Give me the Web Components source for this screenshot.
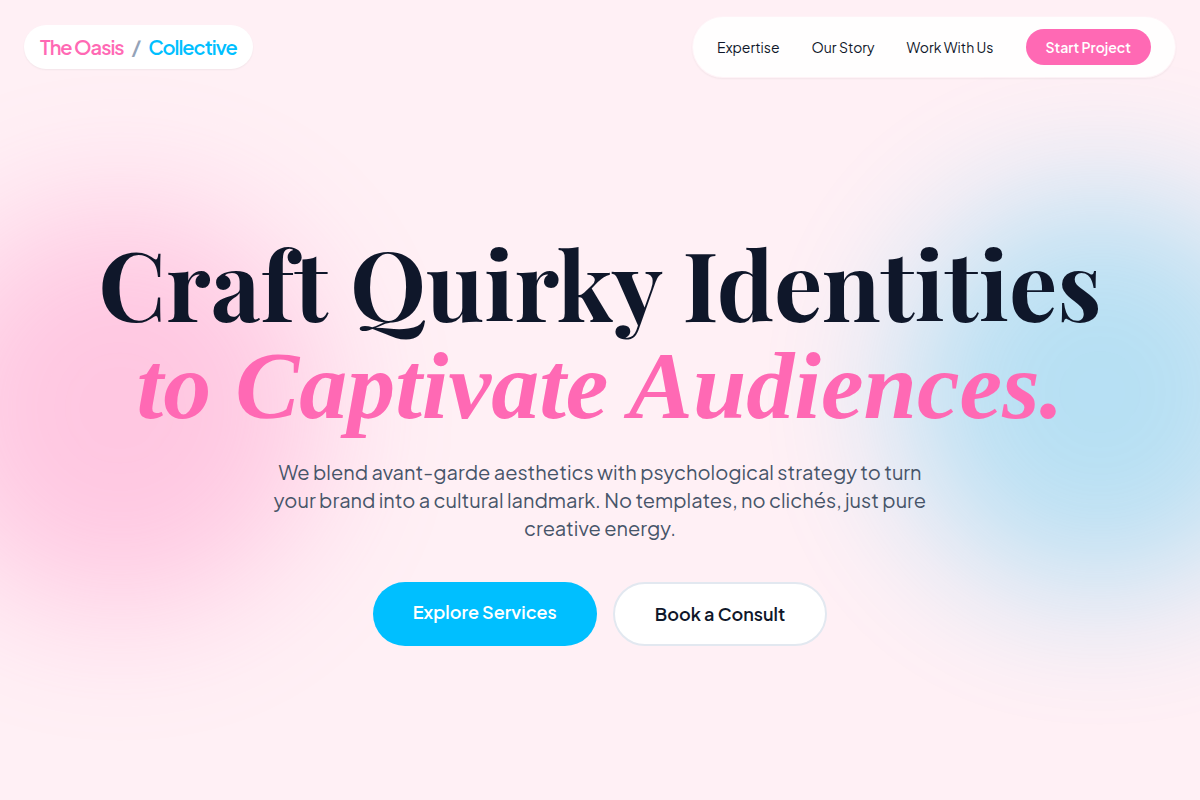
<!DOCTYPE html>
<html lang="en"><head><meta charset="utf-8"><meta name="viewport" content="width=device-width"><title>The Oasis / Collective</title>
<style>
body{margin:0;background:#fff0f5;font-family:"Plus Jakarta Sans","Outfit",Inter,sans-serif;color:#0f172a}
</style></head><body>
<oasis-page></oasis-page>
<script>
const define=(name,html)=>customElements.define(name,class extends HTMLElement{
  constructor(){super();const t=document.createElement('template');t.innerHTML=html;this.attachShadow({mode:'open'}).append(t.content.cloneNode(true));}
});
define('site-brand',`<style>
:host{display:block}
a{display:flex;gap:8px;align-items:center;background:#fff;border-radius:999px;padding:8px 16px;font-size:20px;line-height:28px;font-weight:600;letter-spacing:-1px;text-decoration:none;color:#ff69b4;box-shadow:0 1px 2px #0000000d}
.s{color:#94a3b8}.c{color:#00bfff}
</style><a href="#"><span>The Oasis</span><span class="s">/</span><span class="c">Collective</span></a>`);
define('site-nav',`<style>
:host{display:block}
nav{display:flex;gap:32px;align-items:center;background:#ffffffe6;border:1px solid #ffffff33;background-clip:padding-box;border-radius:999px;padding:12px 24px;font-size:14px;line-height:20px;box-shadow:0 1px 2px #0000000d}
::slotted(a){color:#0f172a;text-decoration:none}
button{font:inherit;font-weight:600;color:#fff;background:#ff69b4;border:0;border-radius:999px;padding:8px 20px}
</style><nav aria-label="Main"><slot></slot><button type="button">Start Project</button></nav>`);
define('glow-orb',`<style>
:host{display:block;position:absolute;width:400px;height:400px;border-radius:50%;background:var(--tint);opacity:.3;filter:blur(70px);pointer-events:none}
</style>`);
define('pill-link',`<style>
:host{display:flex}
a{font-size:18px;line-height:28px;font-weight:600;padding:16px 40px;border-radius:999px;background:#00bfff;color:#fff;text-decoration:none}
:host([outline]) a{background:#fff;color:#0f172a;border:2px solid #e2e8f0}
</style><a href="#"><slot></slot></a>`);
define('hero-section',`<style>
:host{display:flex;flex-direction:column;align-items:center;text-align:center}
h1{margin:0;font-family:"Playfair Display","DM Serif Display","Liberation Serif",serif;font-size:96px;line-height:96px;font-weight:700}
em{color:#ff69b4;font-family:"Liberation Serif",serif}
p{font-size:20px;line-height:28px;color:#475569;max-width:672px;margin:24px 0 40px}
div{display:flex;justify-content:center;gap:16px}
</style><h1>Craft Quirky Identities<br><em>to Captivate Audiences.</em></h1>
<p>We blend avant-garde aesthetics with psychological strategy to turn your brand into a cultural landmark. No templates, no clichés, just pure creative energy.</p>
<div><pill-link>Explore Services</pill-link><pill-link outline>Book a Consult</pill-link></div>`);
define('oasis-page',`<style>
:host{display:flex;flex-direction:column;min-height:100vh;position:relative;overflow:hidden}
header,hero-section{position:relative}
header{display:flex;justify-content:space-between;align-items:center;padding:16px 24px}
hero-section{flex:1;justify-content:center;padding-bottom:14px}
.pink{--tint:#ff69b4;top:26%;left:-80px}
.blue{--tint:#12bbf0;bottom:26%;right:-100px}
</style><glow-orb class="pink"></glow-orb><glow-orb class="blue"></glow-orb>
<header><site-brand></site-brand><site-nav><a href="#">Expertise</a><a href="#">Our Story</a><a href="#">Work With Us</a></site-nav></header><hero-section></hero-section>`);
</script></body></html>
